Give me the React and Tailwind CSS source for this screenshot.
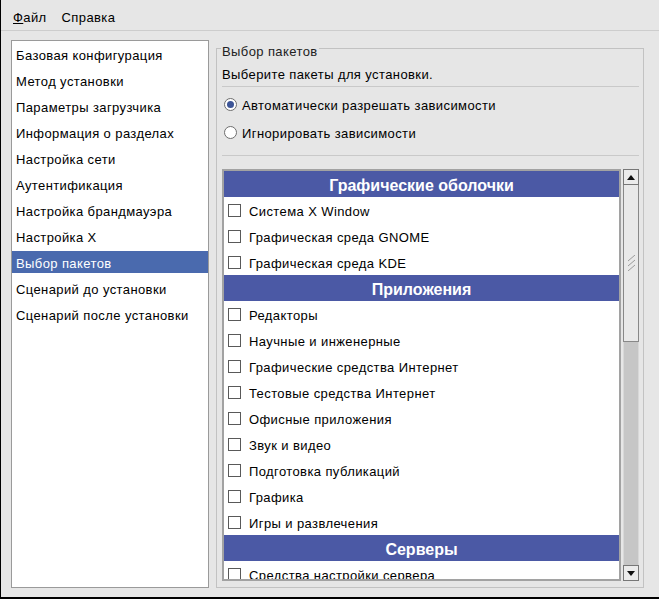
import React from 'react'

const steps = [
  "Базовая конфигурация",
  "Метод установки",
  "Параметры загрузчика",
  "Информация о разделах",
  "Настройка сети",
  "Аутентификация",
  "Настройка брандмауэра",
  "Настройка X",
  "Выбор пакетов",
  "Сценарий до установки",
  "Сценарий после установки",
]

const groups = [
  { title: "Графические оболочки", items: ["Система X Window", "Графическая среда GNOME", "Графическая среда KDE"] },
  {
    title: "Приложения",
    items: [
      "Редакторы",
      "Научные и инженерные",
      "Графические средства Интернет",
      "Тестовые средства Интернет",
      "Офисные приложения",
      "Звук и видео",
      "Подготовка публикаций",
      "Графика",
      "Игры и развлечения",
    ],
  },
  { title: "Серверы", items: ["Средства настройки сервера"] },
]

const Radio = ({ checked }) => (
  <span className="w-[13px] h-[13px] rounded-full border border-[#6e6e6e] bg-white flex items-center justify-center shrink-0">
    {checked && <span className="w-[7px] h-[7px] rounded-full bg-[#3d5597]" />}
  </span>
)

const App = () => {
  return (
    <div
      className="w-[659px] h-[599px] bg-[#e6e6e6] border-l border-b-2 border-black flex flex-col overflow-hidden text-[13px] tracking-[0.4px] text-black"
      style={{ fontFamily: '"Liberation Sans", Arial, sans-serif' }}
    >
      {/* menu */}
      <div className="h-[31px] border-b border-[#cdcdcd] flex items-center gap-[15px] pl-[12px] shrink-0">
        <span className="mt-[6px]"><span className="underline">Ф</span>айл</span>
        <span className="mt-[6px]">Справка</span>
      </div>

      <div className="flex pl-[10px] pt-[9px]">
        {/* steps */}
        <div className="w-[198px] h-[548px] border border-[#9a9a9a] bg-white pt-[2px] flex flex-col gap-[4px] shrink-0">
          {steps.map((s, i) => (
            <div
              key={s}
              className={
                "h-[22px] flex items-center pl-[4px] " +
                (i === 8 ? "bg-[#4a6aae] text-white" : "")
              }
            >
              <span className="mt-[4px]">{s}</span>
            </div>
          ))}
        </div>

        {/* frame */}
        <div className="relative ml-[7px] mt-[8px] w-[428px] h-[540px] border border-[#c2c2c2] pl-[5px] pr-[4px] flex flex-col shrink-0">
          <span className="absolute left-[4px] -top-[5px] px-[1px] bg-[#e6e6e6] leading-[15px] text-[#222]">
            Выбор пакетов
          </span>
          <div className="h-[13px]" />
          <div className="h-[24px] flex items-center">
            <span className="mt-[2px]">Выберите пакеты для установки.</span>
          </div>
          <div className="h-px bg-[#c9c9c9]" />
          <div className="pt-[3px]">
            <div className="h-[28px] flex items-center gap-[5px] pl-[2px]">
              <Radio checked />
              <span className="mt-[4px]">Автоматически разрешать зависимости</span>
            </div>
            <div className="h-[28px] flex items-center gap-[5px] pl-[2px]">
              <Radio />
              <span className="mt-[4px]">Игнорировать зависимости</span>
            </div>
          </div>
          <div className="h-px bg-[#c9c9c9] mt-[9px]" />

          <div className="mt-[13px] h-[412px] flex gap-[2px]">
            <div className="w-[399px] h-full border-2 border-[#a2a2a2] bg-white overflow-hidden">
              {groups.map((g) => (
                <div key={g.title}>
                  <div className="h-[26px] bg-[#4b59a5] text-white font-bold text-[16px] tracking-normal flex items-center justify-center">
                    <span className="mt-[4px]">{g.title}</span>
                  </div>
                  {g.items.map((it) => (
                    <div key={it} className="h-[26px] flex items-center pl-[4px]">
                      <span className="w-[13px] h-[13px] border border-[#595959] bg-white shrink-0" />
                      <span className="ml-[8px] mt-[4px]">{it}</span>
                    </div>
                  ))}
                </div>
              ))}
            </div>

            {/* scrollbar */}
            <div className="w-[16px] h-full flex flex-col bg-[#c6c6c6] border-x border-[#d8d8d8]">
              <div className="h-[16px] border border-[#777] bg-[#ebebeb] flex items-center justify-center shrink-0 -mx-px">
                <svg width="8" height="5" viewBox="0 0 8 5"><path d="M4 0 L8 5 L0 5 Z" fill="#111" /></svg>
              </div>
              <div className="h-[157px] border border-[#888] border-t-0 bg-[#e9e9e9] flex items-center justify-center shrink-0 -mx-px">
                <svg width="9" height="16" viewBox="0 0 9 16">
                  <path d="M1 6 L8 0 M1 11 L8 5 M1 16 L8 10" stroke="#9a9a9a" strokeWidth="1" />
                </svg>
              </div>
              <div className="flex-1" />
              <div className="h-[16px] border border-[#777] bg-[#ebebeb] flex items-center justify-center shrink-0 -mx-px">
                <svg width="8" height="5" viewBox="0 0 8 5"><path d="M0 0 L8 0 L4 5 Z" fill="#111" /></svg>
              </div>
            </div>
          </div>
        </div>
      </div>
    </div>
  )
}

export default App
